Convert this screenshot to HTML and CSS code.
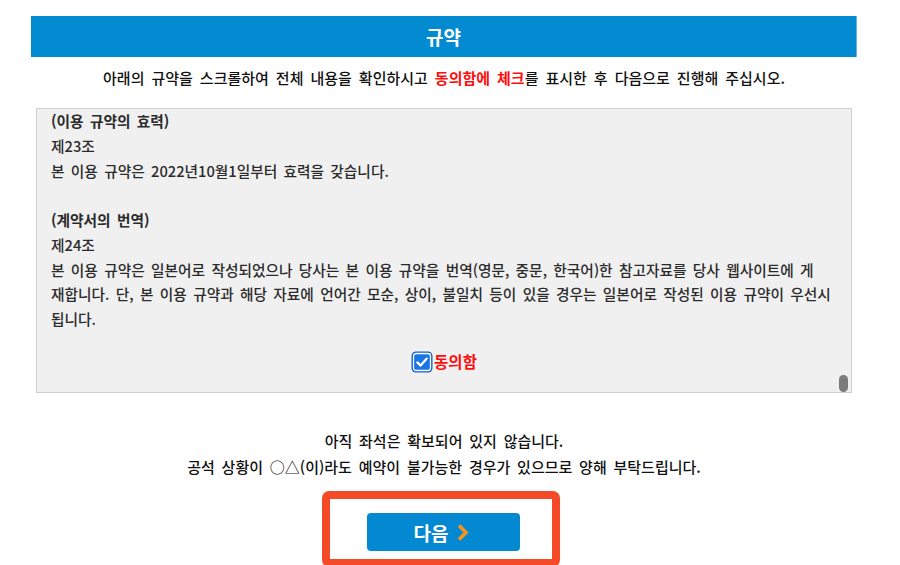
FILE: index.html
```html
<!DOCTYPE html>
<html lang="ko">
<head>
    <meta charset="UTF-8">
    <meta name="viewport" content="width=device-width, initial-scale=1.0">
    <title>규약</title>
    <link rel="stylesheet" href="styles.css">
</head>
<body>
    <div class="page">
        <h1 class="title-bar">규약</h1>
        <p class="notice">아래의 규약을 스크롤하여 전체 내용을 확인하시고 <strong>동의함에 체크</strong>를 표시한 후 다음으로 진행해 주십시오.</p>

        <div class="terms">
            <div class="terms-body">
                <p class="article-title">(이용 규약의 효력)</p>
                <p>제23조</p>
                <p>본 이용 규약은 2022년10월1일부터 효력을 갖습니다.</p>
                <p class="blank">&nbsp;</p>
                <p class="article-title">(계약서의 번역)</p>
                <p>제24조</p>
                <p>본 이용 규약은 일본어로 작성되었으나 당사는 본 이용 규약을 번역(영문, 중문, 한국어)한 참고자료를 당사 웹사이트에 게<br>재합니다. 단, 본 이용 규약과 해당 자료에 언어간 모순, 상이, 불일치 등이 있을 경우는 일본어로 작성된 이용 규약이 우선시<br>됩니다.</p>
                <label class="agree">
                    <span class="check-box">
                        <svg width="22" height="22" viewBox="0 0 22 22">
                            <rect x="0.5" y="0.5" width="21" height="21" rx="4.5" fill="#0d5fc9"/>
                            <rect x="2.5" y="2.5" width="17" height="17" rx="2.5" fill="#1b74e4" stroke="#ffffff" stroke-width="1.3"/>
                            <path d="M6.3 11.4 L9.6 14.6 L15.8 7.6" fill="none" stroke="#ffffff" stroke-width="2.2" stroke-linecap="round" stroke-linejoin="round"/>
                        </svg>
                    </span>
                    <span class="agree-text">동의함</span>
                </label>
            </div>
            <div class="scroll-thumb"></div>
        </div>

        <div class="seat-notice">
            <p>아직 좌석은 확보되어 있지 않습니다.</p>
            <p>공석 상황이 ○△(이)라도 예약이 불가능한 경우가 있으므로 양해 부탁드립니다.</p>
        </div>

        <div class="next-frame">
            <button class="next-btn">다음
                <svg width="12" height="17" viewBox="0 0 12 17">
                    <path d="M2 1.5 L9 8.5 L2 15.5" fill="none" stroke="#f7941d" stroke-width="3.6"/>
                </svg>
            </button>
        </div>
    </div>
</body>
</html>
```

FILE: styles.css
```css
:root {
    --blue: #038bd2;
    --btn-blue: #0488d1;
    --red: #ff0d0d;
    --frame-red: #f44a27;
    --text: #222222;
}
body {
    margin: 0;
    overflow: hidden;
    background: #ffffff;
    color: var(--text);
    font-family: "Noto Sans CJK KR", "Noto Sans", sans-serif;
}
p {
    margin: 0;
}
.page {
    width: 826px;
    margin: 16px 0 0 31px;
}
.title-bar {
    margin: 0;
    height: 41px;
    line-height: 41px;
    background: var(--blue);
    border-right: 1px solid #62b6e6;
    color: #ffffff;
    font-size: 19px;
    font-weight: bold;
    text-align: center;
}
.notice {
    margin-top: 10px;
    line-height: 22px;
    font-size: 15px;
    font-weight: 500;
    word-spacing: 2.8px;
    text-align: center;
    color: #111111;
}
.notice strong {
    color: var(--red);
    font-weight: bold;
}
.terms {
    position: relative;
    box-sizing: border-box;
    height: 285px;
    margin: 19px 5px 0 5px;
    background: #f0f0f0;
    border: 1px solid #cfcfcf;
    overflow: hidden;
}
.terms-body {
    padding: 0 6px 0 14px;
    font-size: 14.7px;
    font-weight: 500;
    line-height: 24.75px;
    word-spacing: 2.2px;
    color: #2b2b2b;
}
.article-title {
    font-weight: bold;
}
.agree {
    display: flex;
    justify-content: center;
    align-items: center;
    margin-top: 18px;
    height: 24px;
    padding-right: 8px;
}
.check-box {
    display: flex;
    width: 22px;
    height: 22px;
}
.agree-text {
    color: var(--red);
    font-weight: bold;
    font-size: 15.5px;
    margin-left: 1px;
}
.scroll-thumb {
    position: absolute;
    right: 3px;
    bottom: 0;
    width: 9px;
    height: 17px;
    border-radius: 5px;
    background: #7b7b7b;
}
.seat-notice {
    margin-top: 35px;
    line-height: 26px;
    font-size: 15px;
    font-weight: 500;
    word-spacing: 2.6px;
    text-align: center;
    color: #111111;
}
.next-frame {
    box-sizing: border-box;
    width: 238px;
    height: 76px;
    margin: 11px 0 0 291px;
    padding: 14px 0 0 37px;
    border: 8px solid var(--frame-red);
    border-radius: 7px;
}
.next-btn {
    display: flex;
    justify-content: center;
    align-items: center;
    gap: 9px;
    width: 153px;
    height: 38px;
    padding: 0 4px 0 0;
    border: none;
    border-radius: 4px;
    background: var(--btn-blue);
    color: #ffffff;
    font-family: inherit;
    font-size: 19px;
    font-weight: bold;
    cursor: pointer;
}
```
